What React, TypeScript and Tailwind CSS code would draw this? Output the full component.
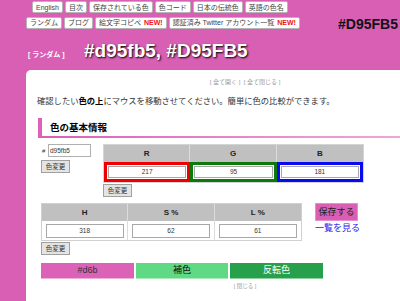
import React from 'react';

const navRow1 = ['English', '目次', '保存されている色', '色コード', '日本の伝統色', '英語の色名'];

const NavBtn: React.FC<{ label: string; isNew?: boolean }> = ({ label, isNew }) => (
  <span className="flex items-center h-[12px] px-[3px] bg-white border border-[#b5b5b5] rounded-[2px] text-[7px] leading-none text-[#444] whitespace-nowrap">
    {label}
    {isNew && <span className="ml-[3px] text-[#f01010] font-bold">NEW!</span>}
  </span>
);

const ChangeBtn: React.FC = () => (
  <button className="block h-[13px] w-[29px] bg-[#e4e4e4] border border-[#a0a0a0] text-[6.5px] leading-none text-[#333]">
    色変更
  </button>
);

export default function App() {
  const rgb = [
    { label: 'R', value: 217, border: 'border-[#ee0000]' },
    { label: 'G', value: 95, border: 'border-[#0b7a0b]' },
    { label: 'B', value: 181, border: 'border-[#0a0af0]' },
  ];
  const hsl = [
    { label: 'H', value: 318 },
    { label: 'S %', value: 62 },
    { label: 'L %', value: 61 },
  ];

  return (
    <div className="w-[400px] h-[301px] overflow-hidden bg-[#d95fb5] font-['Liberation_Sans','Noto_Sans_CJK_JP',sans-serif] text-[#333]">
      {/* Header */}
      <div className="h-[70px]">
        <div className="flex gap-[2px] pl-[32px] pt-[1px]">
          {navRow1.map(l => (
            <NavBtn key={l} label={l} />
          ))}
        </div>
        <div className="flex items-center gap-[2px] pl-[26px] mt-[1px]">
          <NavBtn label="ランダム" />
          <NavBtn label="ブログ" />
          <NavBtn label="絵文字コピペ" isNew />
          <NavBtn label="認証済み Twitter アカウント一覧" isNew />
          <span className="ml-auto mr-[2px] text-[14px] font-bold text-[#111] leading-none mt-[3px]">#D95FB5</span>
        </div>
        <div className="flex items-baseline pl-[28px] mt-[10px]">
          <span className="text-[7px] font-bold text-white w-[56px]">[ ランダム ]</span>
          <span className="text-[19px] font-bold text-white leading-none [text-shadow:1px_1px_2px_#000]">
            #d95fb5, #D95FB5
          </span>
        </div>
      </div>

      {/* Panel */}
      <div className="ml-[26px] w-[438px] h-[240px] bg-white rounded-tl-[5px] pt-[9px]">
        <div className="text-center text-[6px] text-[#999] leading-none">[ 全て開く ]&nbsp;&nbsp;[ 全て閉じる ]</div>
        <p className="mt-[12px] pl-[11px] text-[8.3px] leading-none text-[#333]">
          確認したい<b className="text-black">色の上</b>にマウスを移動させてください。簡単に色の比較ができます。
        </p>
        <div className="ml-[12px] mt-[13px] h-[19px] flex items-center border-l-4 border-[#e060b8] pl-[8px] relative">
          <span className="text-[9.5px] font-bold text-black">色の基本情報</span>
          <div className="absolute left-[-4px] right-0 bottom-[-1px] h-[2px] bg-gradient-to-r from-[#d95fb5] to-[#f2b3dc]" />
        </div>

        {/* RGB row */}
        <div className="flex mt-[7px] pl-[15px]">
          <div className="w-[62px] flex flex-col">
            <div className="flex items-center h-[13px]">
              <span className="text-[6px] leading-none text-[#333] w-[7px] pl-[1px]">#</span>
              <div className="h-[13px] w-[43px] border border-[#b0b0b0] text-[6.5px] leading-[11px] pl-[1px] text-[#333]">d95fb5</div>
            </div>
            <div className="mt-[3px] flex">
              <ChangeBtn />
            </div>
          </div>
          <div className="flex flex-col">
            <div className="w-[261px] border border-[#d4d4d4]">
              <div className="grid grid-cols-3 bg-[#c0c0c0] h-[17px]">
                {rgb.map(c => (
                  <div key={c.label} className="flex items-center justify-center text-[8px] font-bold text-[#222] border-r border-[#dcdcdc] last:border-r-0">
                    {c.label}
                  </div>
                ))}
              </div>
              <div className="grid grid-cols-3 h-[20px]">
                {rgb.map(c => (
                  <div key={c.label} className={`border-[3px] ${c.border} p-[1px]`}>
                    <div className="h-full border border-[#a8a8a8] bg-white flex items-center justify-center text-[6.5px] text-[#333]">
                      {c.value}
                    </div>
                  </div>
                ))}
              </div>
            </div>
            <div className="mt-[1px] flex">
              <ChangeBtn />
            </div>
          </div>
        </div>

        {/* HSL row */}
        <div className="flex mt-[6px] pl-[15px]">
          <div className="flex flex-col">
            <div className="w-[261px] border border-[#d0d0d0]">
              <div className="grid grid-cols-3 bg-[#c0c0c0] h-[17px]">
                {hsl.map(c => (
                  <div key={c.label} className="flex items-center justify-center text-[8px] font-bold text-[#222] border-r border-[#dcdcdc] last:border-r-0">
                    {c.label}
                  </div>
                ))}
              </div>
              <div className="grid grid-cols-3 h-[19px]">
                {hsl.map(c => (
                  <div key={c.label} className="flex items-center justify-center border-r border-[#dcdcdc] last:border-r-0">
                    <div className="w-[78px] h-[14px] border border-[#a8a8a8] bg-white flex items-center justify-center text-[6.5px] text-[#333]">
                      {c.value}
                    </div>
                  </div>
                ))}
              </div>
            </div>
            <div className="mt-[1px] flex">
              <ChangeBtn />
            </div>
          </div>
          <div className="ml-[13px] flex flex-col items-start">
            <button className="block h-[18px] w-[43px] bg-[#d95fb5] border border-[#e98fd0] text-[9px] text-[#222] leading-none">
              保存する
            </button>
            <span className="mt-[2px] text-[9px] leading-[11px] text-[#2323e8]">一覧を見る</span>
          </div>
        </div>

        {/* Color bars */}
        <div className="flex gap-[2px] mt-[8px] pl-[15px]">
          <div className="w-[93px] h-[16px] bg-[#dc62b8] border-b border-[#f0b0dc] flex items-center justify-center text-[9px] text-[#333]">#d6b</div>
          <div className="w-[92px] h-[16px] bg-[#5fd983] border-b border-[#a8ecbc] flex items-center justify-center text-[9px] text-[#111]">補色</div>
          <div className="w-[93px] h-[16px] bg-[#26a04a] border-b border-[#8fd2a2] flex items-center justify-center text-[9px] text-white">反転色</div>
        </div>
        <div className="text-center text-[5.5px] text-[#999] mt-[5px] leading-none">[ 閉じる ]</div>
      </div>
    </div>
  );
}
